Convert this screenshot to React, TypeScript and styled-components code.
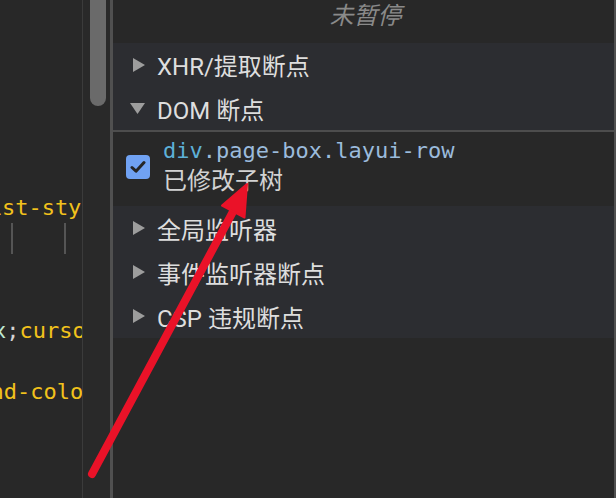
import React from "react";
import styled, { createGlobalStyle } from "styled-components";

const Global = createGlobalStyle`
  html, body { margin: 0; padding: 0; background: #282828; overflow: hidden; }
  #root { width: 616px; height: 498px; }
`;

const uiFont = `Roboto, "Noto Sans CJK SC", sans-serif`;
const monoFont = `"DejaVu Sans Mono", "Liberation Mono", monospace`;

const Screen = styled.div`
  position: relative;
  display: flex;
  width: 616px;
  height: 498px;
  background: #282828;
  overflow: hidden;
`;

const CodePane = styled.div`
  width: 82px;
  flex: none;
  overflow: hidden;
  padding-top: 7.8px;
  box-sizing: border-box;
  font-family: ${monoFont};
  font-size: 22px;
  line-height: 30.8px;
  white-space: pre;
`;

const CodeLine = styled.div<{ $shift: number }>`
  position: relative;
  height: 30.8px;
  margin-left: ${(p) => p.$shift}px;
  color: #f2c21c;
`;

const Num = styled.span`
  color: #bfe8d2;
`;
const Punct = styled.span`
  color: #d4d4d4;
`;

const GuideRow = styled.div`
  display: flex;
  gap: 51px;
  height: 30.8px;
  padding-left: 11px;
`;
const Guide = styled.span`
  width: 2px;
  height: 100%;
  background: #555555;
`;

const ScrollTrack = styled.div`
  width: 28px;
  flex: none;
  box-sizing: border-box;
  border-left: 1px solid #3b3b3b;
  background: #292929;
  padding-left: 7px;
`;
const ScrollThumb = styled.div`
  width: 16px;
  height: 106px;
  background: #6a6a6a;
  border-radius: 0 0 8px 8px;
`;

const Divider = styled.div<{ $w: number }>`
  width: ${(p) => p.$w}px;
  flex: none;
  background: #505050;
`;

const Sidebar = styled.div`
  flex: 1;
  display: flex;
  flex-direction: column;
  background: #282828;
  font-family: ${uiFont};
  font-size: 24px;
`;

const Header = styled.div`
  height: 43px;
  display: flex;
  justify-content: center;
  line-height: 32px;
  color: #8a8a8a;
  font-style: italic;
  padding-left: 4px;
`;

const Section = styled.div`
  background: #2c2d31;
`;

const Row = styled.div<{ $h: number }>`
  height: ${(p) => p.$h}px;
  display: flex;
  align-items: center;
  color: #dedede;
`;

const Caret = styled.span`
  width: 44px;
  flex: none;
  display: flex;
  align-items: center;
  padding-left: 20px;
  box-sizing: border-box;
`;

const Rule = styled.div`
  height: 2px;
  background: #4d4d4d;
`;

const BreakItem = styled.div`
  height: 74px;
  box-sizing: border-box;
  padding: 4px 0 10px 13px;
  display: flex;
  align-items: center;
  gap: 13px;
`;

const Check = styled.span`
  width: 24px;
  height: 24px;
  flex: none;
  border-radius: 4px;
  background: #70a2f3;
  display: flex;
  align-items: center;
  justify-content: center;
  margin-top: 2px;
`;

const ItemText = styled.div`
  display: flex;
  flex-direction: column;
`;

const Selector = styled.div`
  font-family: ${monoFont};
  font-size: 22px;
  line-height: 30px;
  color: #9bbbdc;
  white-space: pre;
`;
const Tag = styled.span`
  color: #5db0d7;
`;
const Desc = styled.div`
  line-height: 30px;
  color: #d2d2d2;
`;

const Overlay = styled.svg`
  position: absolute;
  left: 0;
  top: 0;
  pointer-events: none;
`;

const RightTri = () => (
  <svg width="12" height="14" viewBox="0 0 12 14">
    <path d="M0 0 L12 7 L0 14 Z" fill="#9d9d9d" />
  </svg>
);
const DownTri = () => (
  <svg width="15" height="11" viewBox="0 0 15 11" style={{ marginLeft: -3 }}>
    <path d="M0 0 L15 0 L7.5 11 Z" fill="#9d9d9d" />
  </svg>
);

const Collapsed: React.FC<{ label: string; h: number }> = ({ label, h }) => (
  <Row $h={h}>
    <Caret>
      <RightTri />
    </Caret>
    {label}
  </Row>
);

export default function App() {
  return (
    <Screen>
      <Global />
      <CodePane>
        <CodeLine $shift={0} />
        <CodeLine $shift={0} />
        <CodeLine $shift={0} />
        <CodeLine $shift={0} />
        <CodeLine $shift={0} />
        <CodeLine $shift={0} />
        <CodeLine $shift={-24.6}>list-style: none;</CodeLine>
        <GuideRow>
          <Guide />
          <Guide />
        </GuideRow>
        <CodeLine $shift={0} />
        <CodeLine $shift={0} />
        <CodeLine $shift={-20.2}>
          <Num>px</Num>
          <Punct>;</Punct>cursor: pointer;
        </CodeLine>
        <CodeLine $shift={0} />
        <CodeLine $shift={-115.5}>background-color: #fff;</CodeLine>
      </CodePane>
      <ScrollTrack>
        <ScrollThumb />
      </ScrollTrack>
      <Divider $w={3} />
      <Sidebar>
        <Header>未暂停</Header>
        <Section>
          <Collapsed label="XHR/提取断点" h={43} />
          <Row $h={44}>
            <Caret>
              <DownTri />
            </Caret>
            DOM 断点
          </Row>
        </Section>
        <Rule />
        <BreakItem>
          <Check>
            <svg width="16" height="14" viewBox="0 0 16 14">
              <path
                d="M2 7.5 L6 11.2 L14 2.5"
                fill="none"
                stroke="#262626"
                strokeWidth="3"
                strokeLinecap="round"
                strokeLinejoin="round"
              />
            </svg>
          </Check>
          <ItemText>
            <Selector>
              <Tag>div</Tag>.page-box.layui-row
            </Selector>
            <Desc>已修改子树</Desc>
          </ItemText>
        </BreakItem>
        <Section>
          <Collapsed label="全局监听器" h={44} />
          <Collapsed label="事件监听器断点" h={44} />
          <Collapsed label="CSP 违规断点" h={44} />
        </Section>
      </Sidebar>
      <Divider $w={2} />
      <Overlay width="616" height="498" viewBox="0 0 616 498">
        <line
          x1="92"
          y1="474"
          x2="236"
          y2="206"
          stroke="#ea1228"
          strokeWidth="8"
          strokeLinecap="round"
        />
        <path d="M247 184 L222 205.5 L244.5 217.5 Z" fill="#ea1228" stroke="#ea1228" strokeWidth="2" strokeLinejoin="round" />
      </Overlay>
    </Screen>
  );
}
